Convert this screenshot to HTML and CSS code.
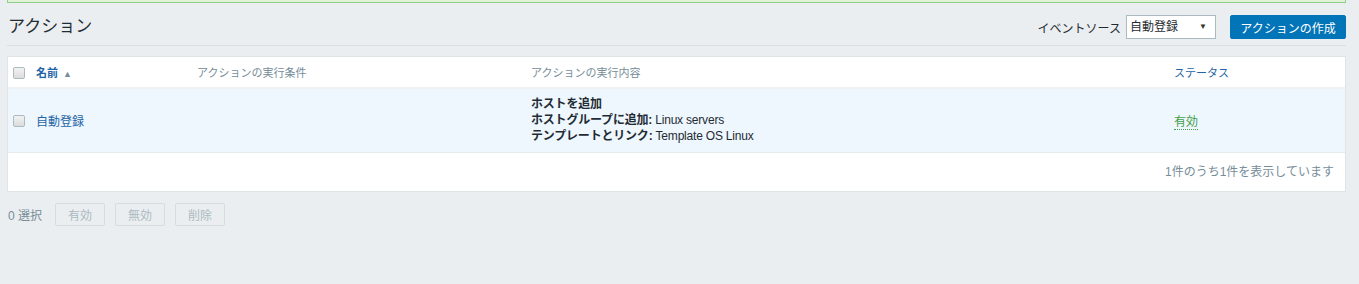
FILE: index.html
```html
<!DOCTYPE html>
<html lang="ja">
<head>
<meta charset="utf-8">
<link rel="stylesheet" href="styles.css">
</head>
<body>
<div class="wrap">
  <div class="msg-good"></div>
  <header class="page-header">
    <h1 class="title">アクション</h1>
    <div class="controls">
      <label class="ctl-label">イベントソース</label>
      <div class="select">自動登録<span class="caret">▼</span></div>
      <button class="btn-primary">アクションの作成</button>
    </div>
  </header>
  <div class="table-box">
    <table class="list">
      <colgroup>
        <col class="c1"><col class="c2"><col class="c3"><col class="c4"><col class="c5">
      </colgroup>
      <thead>
        <tr>
          <th><span class="cb"></span></th>
          <th class="sort">名前 <span class="arrow">▲</span></th>
          <th>アクションの実行条件</th>
          <th>アクションの実行内容</th>
          <th class="link-h">ステータス</th>
        </tr>
      </thead>
      <tbody>
        <tr class="row">
          <td><span class="cb"></span></td>
          <td><span class="name-link">自動登録</span></td>
          <td></td>
          <td class="ops">
            <div><b>ホストを追加</b></div>
            <div><b>ホストグループに追加:</b> Linux servers</div>
            <div><b>テンプレートとリンク:</b> Template OS Linux</div>
          </td>
          <td><span class="status-on">有効</span></td>
        </tr>
      </tbody>
    </table>
    <div class="table-foot">1件のうち1件を表示しています</div>
  </div>
  <div class="actions">
    <span class="sel-count">0 選択</span>
    <button class="btn-dis">有効</button>
    <button class="btn-dis">無効</button>
    <button class="btn-dis">削除</button>
  </div>
</div>
</body>
</html>
```
FILE: styles.css
```css
* { box-sizing: border-box; }
html, body { margin: 0; padding: 0; }
body {
  background: #ebeef0;
  font-family: "Liberation Sans", Arial, "Noto Sans CJK JP", sans-serif;
  font-size: 12px;
  color: #1f2c33;
}
.wrap {
  padding: 0 13px 0 7px;
}
.msg-good {
  height: 3px;
  background: #dff1d6;
  border: 1px solid #8fcf8a;
  border-top: 0;
}
.page-header {
  display: flex;
  align-items: center;
  justify-content: space-between;
  height: 43px;
  padding-top: 12px;
  padding-bottom: 6px;
  border-bottom: 1px solid #dadfe2;
}
.title {
  margin: 0 0 0 1px;
  font-weight: normal;
  font-size: 17px;
  color: #1f2c33;
  line-height: 24px;
}
.controls {
  display: flex;
  align-items: center;
}
.ctl-label {
  margin-right: 5px;
  font-size: 12px;
}
.select {
  position: relative;
  width: 90px;
  height: 24px;
  border: 1px solid #acbbc2;
  background: #fff;
  line-height: 22px;
  padding-left: 3px;
  font-size: 12px;
}
.caret {
  position: absolute;
  right: 8px;
  top: 0;
  font-size: 8px;
  color: #333;
}
.btn-primary {
  margin-left: 14px;
  height: 24px;
  width: 116px;
  padding: 0;
  border: 1px solid #0275b8;
  background: #0275b8;
  color: #fff;
  font-family: inherit;
  font-size: 12px;
  border-radius: 2px;
}
.table-box {
  margin-top: 10px;
  background: #fff;
  border: 1px solid #dfe4e7;
}
.list {
  width: 100%;
  border-collapse: collapse;
  table-layout: fixed;
}
.c1 { width: 22px; }
.c2 { width: 161px; }
.c3 { width: 334px; }
.c4 { width: 643px; }
.c5 { width: auto; }
.list th {
  height: 31px;
  text-align: left;
  font-weight: normal;
  font-size: 11px;
  color: #768d99;
  padding: 0 6px;
  border-bottom: 2px solid #eff2f4;
}
.list th:first-child, .list td:first-child { padding: 0 0 0 5px; }
.list th.sort {
  color: #1f65a6;
  font-weight: bold;
}
.arrow {
  color: #768d99;
  font-size: 9px;
  margin-left: 2px;
}
.list th.link-h { color: #1f65a6; }
.cb {
  display: inline-block;
  width: 12px;
  height: 12px;
  border: 1px solid #acbbc2;
  border-radius: 2px;
  background: linear-gradient(#f2f2f2, #dcdcdc);
  vertical-align: middle;
}
.row td {
  background: #eef6fe;
  height: 64px;
  padding: 0 6px;
  border-bottom: 1px solid #e6ebee;
  vertical-align: middle;
}
.name-link {
  color: #1f65a6;
  font-size: 12px;
}
.ops {
  line-height: 16px;
  font-size: 12px;
  letter-spacing: -0.2px;
}
.ops b { font-weight: bold; }
.status-on {
  color: #429e47;
  border-bottom: 1px dotted #429e47;
}
.table-foot {
  height: 38px;
  line-height: 38px;
  text-align: right;
  padding-right: 11px;
  color: #768d99;
  font-size: 12px;
}
.actions {
  display: flex;
  align-items: center;
  margin-top: 11px;
  padding-left: 1px;
}
.sel-count {
  color: #768d99;
  margin-right: 13px;
  font-size: 12px;
}
.btn-dis {
  width: 50px;
  height: 23px;
  margin-right: 10px;
  padding: 0;
  background: #ebeef0;
  border: 1px solid #d6dce0;
  color: #acbbc2;
  font-family: inherit;
  font-size: 12px;
  border-radius: 2px;
}
```
